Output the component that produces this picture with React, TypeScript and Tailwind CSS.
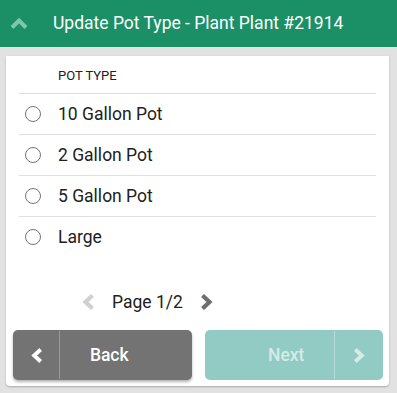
const potTypes = ['10 Gallon Pot', '2 Gallon Pot', '5 Gallon Pot', 'Large'];

// chunky chevron, font-awesome style
function Chevron({ dir, className }: { dir: 'left' | 'right' | 'up'; className?: string }) {
  if (dir === 'up') {
    return (
      <svg viewBox="0 0 18 11" className={className} fill="none">
        <path d="M2 9.5 L9 2.5 L16 9.5" stroke="currentColor" strokeWidth={4} strokeLinejoin="miter" />
      </svg>
    );
  }
  const d = dir === 'left' ? 'M11.5 1.5 L4.5 8 L11.5 14.5' : 'M2.5 1.5 L9.5 8 L2.5 14.5';
  return (
    <svg viewBox="0 0 14 16" className={className} fill="none">
      <path d={d} stroke="currentColor" strokeWidth={4.2} strokeLinejoin="miter" />
    </svg>
  );
}

export default function App() {
  return (
    <div className="w-[397px] h-[393px] bg-[#e2e2e2] font-['Roboto',sans-serif] overflow-hidden">
      {/* header */}
      <div className="h-[47px] bg-[#1b8f66] flex items-center">
        <Chevron dir="up" className="ml-[10px] w-[18px] h-[11px] text-[#7fc7a9]" />
        <span className="ml-[25px] text-white text-[17.5px]">Update Pot Type - Plant Plant #21914</span>
      </div>

      {/* card */}
      <div className="mt-[9px] ml-[6px] w-[383px] bg-white rounded-b-[4px] shadow-[0_1px_2px_rgba(0,0,0,0.25)] h-[330px] flex flex-col">
        <div className="mx-[13px]">
          <div className="h-[37px] flex items-center pl-[39px] pt-[3px] text-[13px] text-[#212121]">
            POT TYPE
          </div>
          {potTypes.map((p) => (
            <div key={p} className="h-[41px] border-t border-[#e0e0e0] flex items-center">
              <span className="ml-[6px] w-[16px] h-[16px] rounded-full border border-[#757575]" />
              <span className="ml-[17px] text-[17.5px] text-[#212121]">{p}</span>
            </div>
          ))}
        </div>

        <div className="mt-[32px] flex items-center pl-[75px]">
          <Chevron dir="left" className="w-[14px] h-[16px] text-[#d0d0d0]" />
          <span className="ml-[17px] text-[17.5px] text-[#212121]">Page 1/2</span>
          <Chevron dir="right" className="ml-[17px] w-[14px] h-[16px] text-[#6f6f6f]" />
        </div>

        <div className="mt-auto mb-[6px] ml-[7px] mr-[6px] flex gap-[13px]">
          <button className="flex-1 h-[50px] rounded-[5px] bg-[#737373] text-white flex items-stretch shadow-[0_2px_3px_rgba(0,0,0,0.3)]">
            <span className="w-[47px] flex items-center justify-center border-r border-[#9a9a9a] my-[1px]">
              <Chevron dir="left" className="w-[13px] h-[15px]" />
            </span>
            <span className="flex-1 flex items-center justify-center pr-[33px] text-[17.5px] font-medium">Back</span>
          </button>
          <button className="flex-1 h-[50px] rounded-[5px] bg-[#91cbc3] text-[#d4ece8] flex items-stretch">
            <span className="flex-1 flex items-center justify-center pl-[34px] text-[17.5px] font-medium">Next</span>
            <span className="w-[49px] flex items-center justify-center border-l border-[#b6ddd7] my-[1px]">
              <Chevron dir="right" className="w-[13px] h-[15px]" />
            </span>
          </button>
        </div>
      </div>
    </div>
  );
}
